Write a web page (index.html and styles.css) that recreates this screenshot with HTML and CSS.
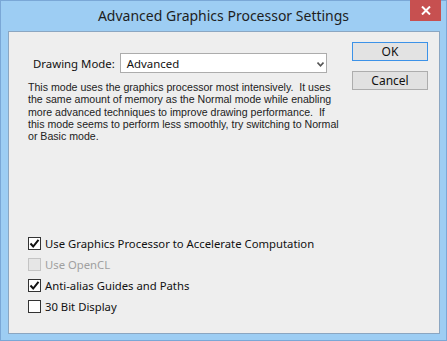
FILE: index.html
```html
<!DOCTYPE html>
<html lang="en">
<head>
  <meta charset="UTF-8">
  <title>Advanced Graphics Processor Settings</title>
  <link rel="stylesheet" href="styles.css">
</head>
<body>
  <div class="window">
    <div class="titlebar">
      <span class="title">Advanced Graphics Processor Settings</span>
      <button class="close" aria-label="Close">
        <svg width="10" height="9" viewBox="0 0 10 9"><path d="M1 0.5 L9 8.5 M9 0.5 L1 8.5" stroke="#fff" stroke-width="2"/></svg>
      </button>
    </div>
    <div class="client">
      <div class="main">
        <div class="mode-row">
          <label class="mode-label">Drawing Mode:</label>
          <div class="select">
            <span>Advanced</span>
            <svg class="arrow" width="7" height="5" viewBox="0 0 7 5"><path d="M0.5 0.5 L3.5 3.8 L6.5 0.5" stroke="#555" stroke-width="1.6" fill="none"/></svg>
          </div>
        </div>
        <p class="desc">This mode uses the graphics processor most intensively.&nbsp; It uses<br>the same amount of memory as the Normal mode while enabling<br>more advanced techniques to improve drawing performance.&nbsp; If<br>this mode seems to perform less smoothly, try switching to Normal<br>or Basic mode.</p>

        <div class="checks">
          <div class="check"><span class="box on"><svg width="11" height="11" viewBox="0 0 11 11"><path d="M1.5 5.5 L4.2 8.5 L9.5 1.8" stroke="#111" stroke-width="2" fill="none"/></svg></span>Use Graphics Processor to Accelerate Computation</div>
          <div class="check disabled"><span class="box"></span>Use OpenCL</div>
          <div class="check"><span class="box on"><svg width="11" height="11" viewBox="0 0 11 11"><path d="M1.5 5.5 L4.2 8.5 L9.5 1.8" stroke="#111" stroke-width="2" fill="none"/></svg></span>Anti-alias Guides and Paths</div>
          <div class="check"><span class="box"></span>30 Bit Display</div>
        </div>
      </div>
      <div class="side">
        <button class="btn default">OK</button>
        <button class="btn">Cancel</button>
      </div>
    </div>
  </div>
</body>
</html>
```

FILE: styles.css
```css
html, body {
  margin: 0;
  padding: 0;
}
body {
  font-family: "Noto Sans", "Open Sans", sans-serif;
  color: #111;
}
.window {
  width: 447px;
  height: 341px;
  box-sizing: border-box;
  background: #9dcdf3;
  border: 1px solid #7aa7d6;
  display: flex;
  flex-direction: column;
}
.titlebar {
  height: 30px;
  position: relative;
  display: flex;
  justify-content: center;
  align-items: center;
}
.title {
  font-size: 14px;
  color: #1e1e1e;
  margin-top: -1px;
}
.close {
  position: absolute;
  top: -1px;
  right: 5px;
  width: 31px;
  height: 21px;
  border: none;
  padding: 0;
  background: #c75050;
  display: flex;
  align-items: center;
  justify-content: center;
}
.client {
  flex: 1;
  margin: 0 6px 6px 7px;
  background: #eeeeee;
  border: 1px solid #8ba6c1;
  display: flex;
}
.main {
  flex: 1;
  padding: 21px 0 0 19px;
}
.mode-row {
  display: flex;
  align-items: center;
  padding-left: 5px;
}
.mode-label {
  font-size: 11.4px;
  margin-right: 5px;
}
.select {
  width: 197px;
  height: 18px;
  border: 1px solid #acacac;
  background: #fff;
  display: flex;
  align-items: center;
  justify-content: space-between;
  font-size: 11.4px;
  padding: 0 2px 0 6px;
}
.arrow {
  margin-top: 2px;
}
.desc {
  font-family: "Liberation Sans", Arial, sans-serif;
  font-size: 10.6px;
  line-height: 12.3px;
  white-space: nowrap;
  margin: 8px 0 0 0;
  color: #222;
}
.checks {
  margin-top: 91px;
}
.check {
  display: flex;
  align-items: center;
  height: 21px;
  font-size: 11.3px;
}
.check.disabled {
  color: #a0a0a0;
}
.box {
  width: 11px;
  height: 11px;
  border: 1px solid #333;
  background: #fff;
  margin-right: 4px;
  display: flex;
  align-items: center;
  justify-content: center;
}
.check.disabled .box {
  border-color: #c4c4c4;
  background: #e6e6e6;
}
.side {
  width: 76px;
  margin-right: 11px;
  padding-top: 10px;
  display: flex;
  flex-direction: column;
  gap: 10px;
}
.btn {
  height: 19px;
  padding: 0;
  font-family: "Noto Sans", "Open Sans", sans-serif;
  font-size: 12px;
  background: #e1e1e1;
  border: 1px solid #adadad;
  color: #111;
  line-height: 16px;
}
.btn.default {
  border-color: #3c92e8;
  background: #e3e3e3;
}
```
